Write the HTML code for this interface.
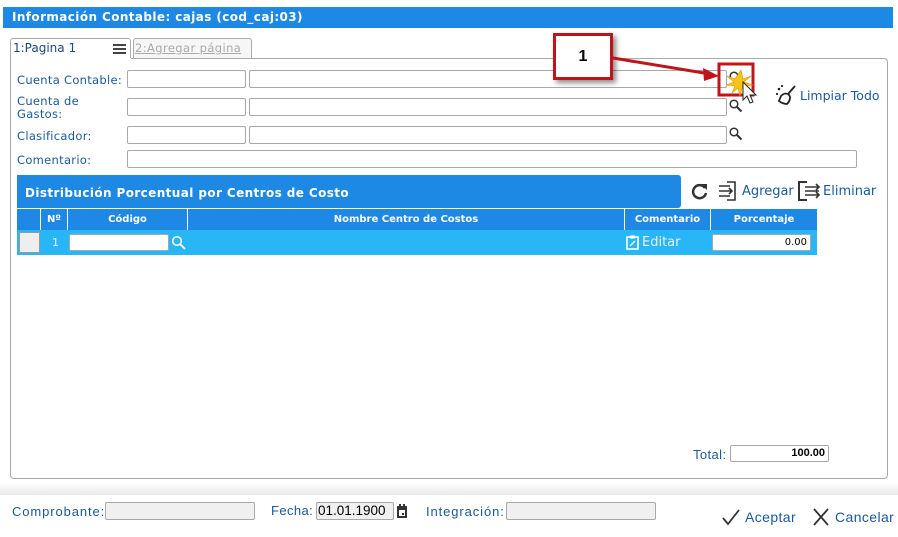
<!DOCTYPE html>
<html><head><meta charset="utf-8"><style>
*{box-sizing:border-box;margin:0;padding:0}
body{width:898px;height:537px;background:#fff;font-family:"DejaVu Sans",Verdana,sans-serif;position:relative;overflow:hidden}
.a{position:absolute}
.lbl{position:absolute;font-size:11.5px;color:#1a5a9c;letter-spacing:.3px}
.in{position:absolute;border:1px solid #a8a8a8;border-radius:2px;background:#fff;height:18px}
.th{position:absolute;top:209px;height:21px;color:#fff;font-size:10px;font-weight:bold;text-align:center;line-height:21px;border-left:1px solid #fff}
.fl{position:absolute;font-family:"Liberation Sans",sans-serif;font-size:13px;color:#1a5a9c;letter-spacing:.4px}
</style></head><body>
<div class="a" style="left:3px;top:7px;width:890px;height:21px;background:#1e88e5;"></div>
<div class="a" style="left:12px;top:10px;color:#fff;font-size:12px;font-weight:bold;letter-spacing:.4px">Información Contable: cajas (cod_caj:03)</div>
<!-- tabs -->
<div class="a" style="left:10px;top:38px;width:121px;height:21px;border:1px solid #aaa;border-bottom:none;border-radius:3px 3px 0 0;background:#fff"></div>
<div class="a" style="left:13px;top:41px;font-size:12px;color:#1a4a7c">1:Pagina 1</div>
<div class="a" style="left:113px;top:44px;width:13px;height:2px;background:#444;box-shadow:0 4px 0 #444,0 8px 0 #444"></div>
<div class="a" style="left:133px;top:38px;width:119px;height:20px;border:1px solid #aaa;border-bottom:none;border-radius:3px 3px 0 0;background:#f6f6f6"></div>
<div class="a" style="left:135px;top:41px;font-size:11.5px;color:#aaa;text-decoration:underline;letter-spacing:.4px">2:Agregar página</div>
<div class="a" style="left:10px;top:58px;width:878px;height:421px;border:1px solid #aaa;border-radius:0 4px 4px 4px"></div>
<div class="a" style="left:11px;top:58px;width:120px;height:2px;background:#fff"></div>
<!-- form -->
<div class="lbl" style="left:17px;top:73px">Cuenta Contable:</div>
<div class="in" style="left:127px;top:70px;width:119px"></div><div class="in" style="left:249px;top:70px;width:478px"></div>
<div class="lbl" style="left:17px;top:95px;line-height:13px">Cuenta de<br>Gastos:</div>
<div class="in" style="left:127px;top:98px;width:119px"></div><div class="in" style="left:249px;top:98px;width:478px"></div>
<div class="lbl" style="left:17px;top:129px">Clasificador:</div>
<div class="in" style="left:127px;top:126px;width:119px"></div><div class="in" style="left:249px;top:126px;width:478px"></div>
<div class="lbl" style="left:17px;top:153px">Comentario:</div>
<div class="in" style="left:127px;top:150px;width:730px"></div>
<svg class="a" style="left:729px;top:71px" width="14" height="14"><circle cx="5" cy="5" r="3.8" fill="none" stroke="#333" stroke-width="1.5"/><path d="M8 8l4.5 4.5" stroke="#333" stroke-width="2"/></svg>
<svg class="a" style="left:729px;top:99px" width="14" height="14"><circle cx="5" cy="5" r="3.8" fill="none" stroke="#333" stroke-width="1.5"/><path d="M8 8l4.5 4.5" stroke="#333" stroke-width="2"/></svg>
<svg class="a" style="left:729px;top:127px" width="14" height="14"><circle cx="5" cy="5" r="3.8" fill="none" stroke="#333" stroke-width="1.5"/><path d="M8 8l4.5 4.5" stroke="#333" stroke-width="2"/></svg>
<!-- Limpiar -->
<svg class="a" style="left:775px;top:84px" width="24" height="22"><circle cx="4" cy="5" r="1.3" fill="#222"/><circle cx="7" cy="2" r="1.1" fill="#222"/><circle cx="2" cy="10" r="1.1" fill="#222"/><path d="M20 2L13 10M6 12c3-3 6-3 8-1s1 6-2 9c-2 0-6-1-8-3z" fill="none" stroke="#222" stroke-width="1.8"/></svg>
<div class="a" style="left:800px;top:88px;font-size:12.5px;color:#1a5a9c">Limpiar Todo</div>
<!-- callout -->
<div class="a" style="left:553px;top:33px;width:60px;height:47px;border:3px solid #c0141a;background:#fff;box-shadow:3px 3px 5px rgba(0,0,0,.45);font-family:'Liberation Sans',sans-serif;font-weight:bold;font-size:16px;text-align:center;line-height:41px">1</div>
<svg class="a" style="left:610px;top:50px" width="150" height="60"><path d="M3 8L100 24" stroke="#c0141a" stroke-width="3"/><path d="M109 26L93 18L94 31z" fill="#c0141a"/><rect x="109" y="14" width="34" height="31" fill="none" stroke="#c0141a" stroke-width="3"/>
<path d="M131 20l2 9l8-3l-7 6l9 3l-9 1l5 7l-7-5l-2 8l-2-8l-6 5l3-7l-9-1l8-3l-7-6l8 3z" fill="#f5c518" stroke="#e09000" stroke-width=".6"/>
<path d="M133 32l0 18l4-4l3 7l3-1l-3-7l6 0z" fill="#fff" stroke="#222" stroke-width="1"/></svg>
<!-- blue section -->
<div class="a" style="left:17px;top:175px;width:664px;height:33px;background:#1e88e5;border-radius:0 3px 3px 0"></div>
<div class="a" style="left:25px;top:186px;color:#fff;font-size:12px;font-weight:bold;letter-spacing:.4px">Distribución Porcentual por Centros de Costo</div>
<svg class="a" style="left:690px;top:181px" width="20" height="20"><path d="M15 7A6.5 6.5 0 1 0 16 12" fill="none" stroke="#333" stroke-width="2.5"/><path d="M11 3h6v6z" fill="#333"/></svg>
<svg class="a" style="left:717px;top:180px" width="22" height="22"><path d="M10 2h8v18h-8" fill="none" stroke="#333" stroke-width="1.6"/><path d="M2 6h11M2 11h13M2 16h11M12 8l3 3l-3 3" fill="none" stroke="#333" stroke-width="1.6"/></svg>
<div class="a" style="left:742px;top:184px;font-size:13px;color:#1a5a9c">Agregar</div>
<svg class="a" style="left:797px;top:180px" width="26" height="22"><path d="M10 2H2v18h8" fill="none" stroke="#333" stroke-width="2"/><path d="M8 7h14M8 11h14M8 15h14M19 4l3 3l-3 3M19 12l3 3l-3 3" fill="none" stroke="#333" stroke-width="1.6"/></svg>
<div class="a" style="left:823px;top:184px;font-size:13px;color:#1a5a9c">Eliminar</div>
<!-- table -->
<div class="a" style="left:17px;top:209px;width:800px;height:21px;background:#1e88e5"></div>
<div class="th" style="left:40px;width:27px">Nº</div>
<div class="th" style="left:67px;width:120px">Código</div>
<div class="th" style="left:187px;width:437px">Nombre Centro de Costos</div>
<div class="th" style="left:624px;width:86px">Comentario</div>
<div class="th" style="left:710px;width:107px">Porcentaje</div>
<div class="a" style="left:17px;top:230px;width:800px;height:25px;background:#29b6f6"></div>
<div class="a" style="left:19px;top:232px;width:21px;height:21px;background:#eee;border:1px solid #999"></div>
<div class="a" style="left:52px;top:236px;color:#fff;font-size:11px">1</div>
<div class="in" style="left:69px;top:234px;width:100px;height:17px"></div>
<svg class="a" style="left:171px;top:235px" width="15" height="15"><circle cx="6" cy="6" r="4.3" fill="none" stroke="#fff" stroke-width="1.5"/><path d="M9 9l5 5" stroke="#fff" stroke-width="1.8"/></svg>
<svg class="a" style="left:626px;top:235px" width="13" height="15"><rect x="1" y="2" width="11" height="12" fill="none" stroke="#fff" stroke-width="1.6"/><rect x="4" y="0.5" width="5" height="3" fill="#fff"/><path d="M4 11l5-5" stroke="#fff" stroke-width="1.4"/></svg>
<div class="a" style="left:642px;top:235px;color:#eef;font-size:13px">Editar</div>
<div class="in" style="left:712px;top:234px;width:99px;height:17px;font-size:10px;text-align:right;padding-right:3px;line-height:15px">0.00</div>
<!-- total -->
<div class="fl" style="left:693px;top:447px">Total:</div>
<div class="in" style="left:730px;top:445px;width:99px;height:17px;font-family:'Liberation Sans',sans-serif;font-weight:bold;font-size:11px;text-align:right;padding-right:3px;line-height:15px">100.00</div>
<!-- footer -->
<div class="a" style="left:0;top:483px;width:898px;height:12px;background:linear-gradient(#fff,#e8e8e8)"></div>
<div class="fl" style="left:12px;top:504px;letter-spacing:.9px">Comprobante:</div>
<div class="in" style="left:105px;top:502px;width:150px;background:#f0f0f0"></div>
<div class="fl" style="left:271px;top:503px">Fecha:</div>
<div class="in" style="left:316px;top:502px;width:78px;background:#f0f0f0;font-family:'Liberation Sans',sans-serif;font-size:13.5px;line-height:16px;padding-left:1px">01.01.1900</div>
<svg class="a" style="left:396px;top:503px" width="12" height="16"><rect x="1" y="3" width="10" height="12" fill="#333"/><rect x="3" y="1" width="2" height="3" fill="#333"/><rect x="7" y="1" width="2" height="3" fill="#333"/><rect x="3" y="7" width="6" height="6" fill="#fff"/><rect x="6" y="10" width="2" height="2" fill="#333"/></svg>
<div class="fl" style="left:426px;top:504px;letter-spacing:.9px">Integración:</div>
<div class="in" style="left:506px;top:502px;width:150px;background:#f0f0f0"></div>
<svg class="a" style="left:721px;top:508px" width="20" height="18"><path d="M2 10l5 6L18 2" fill="none" stroke="#333" stroke-width="1.8"/></svg>
<div class="fl" style="left:745px;top:509px;font-size:14px">Aceptar</div>
<svg class="a" style="left:812px;top:508px" width="18" height="18"><path d="M2 1l14 16M16 1L2 17" stroke="#333" stroke-width="1.8"/></svg>
<div class="fl" style="left:835px;top:509px;font-size:14px">Cancelar</div>
</body></html>
